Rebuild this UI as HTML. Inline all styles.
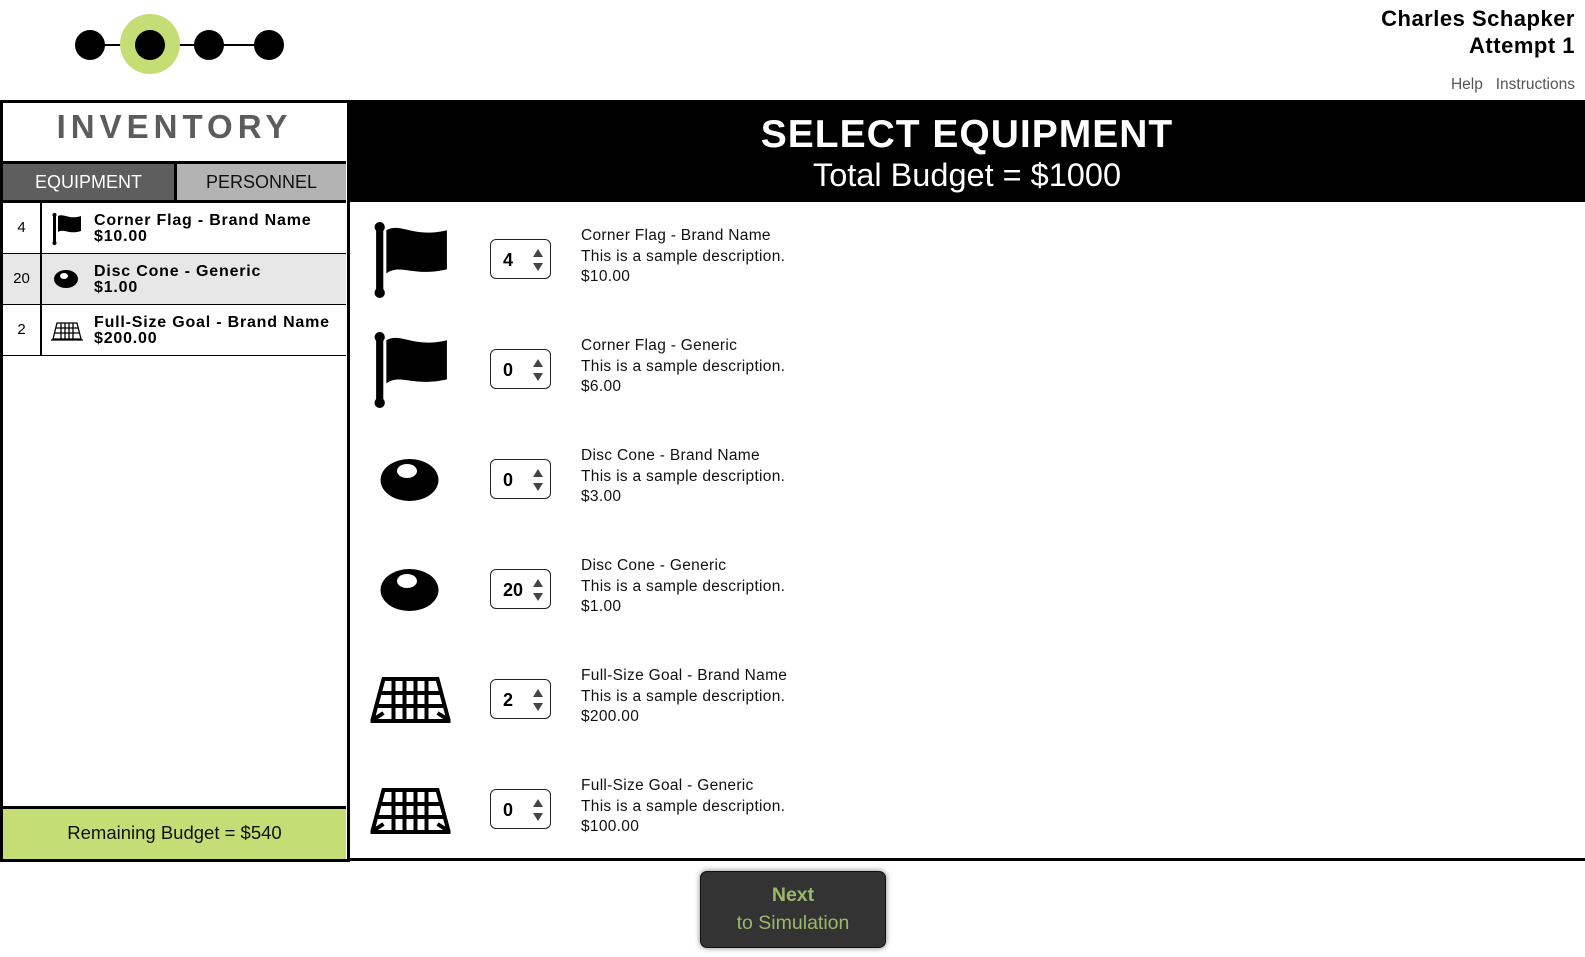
<!DOCTYPE html>
<html><head><style>
*{margin:0;padding:0;box-sizing:border-box}
body{width:1585px;height:957px;background:#fff;font-family:"Liberation Sans",sans-serif;position:relative;overflow:hidden}
.a{position:absolute}
.row{position:absolute;left:3px;width:343px;height:51px;border-bottom:1px solid #000}
.row .n{position:absolute;left:0;top:0;width:39px;height:50px;border-right:2px solid #000;text-align:center;line-height:50px;font-size:15px}
.row .t{position:absolute;left:91px;top:10px;font-weight:bold;font-size:16px;line-height:16px;letter-spacing:.8px}
.row svg{position:absolute;left:48px;top:10px}
.spin{position:absolute;left:490px;width:61px;height:40px;border:1.5px solid #222;border-radius:6px}
.spin b{position:absolute;left:12px;top:10px;font-size:18px}
.spin i{position:absolute;left:42px;width:0;height:0;border-left:5px solid transparent;border-right:5px solid transparent}
.up{top:9px;border-bottom:8px solid #444}
.dn{top:23px;border-top:8px solid #444}
.d{position:absolute;left:581px;font-size:15.5px;line-height:20.5px;color:#111;letter-spacing:.3px}
</style></head><body>
<svg class="a" style="left:72px;top:14px" width="225" height="62">
<line x1="18" y1="31" x2="197" y2="31" stroke="#000" stroke-width="2"/>
<circle cx="78" cy="30" r="30" fill="#c4dd74"/>
<circle cx="18" cy="31" r="15"/><circle cx="78" cy="31" r="15"/><circle cx="137" cy="31" r="15"/><circle cx="197" cy="31" r="15"/>
</svg>
<div class="a" style="right:10px;top:5px;text-align:right;font-weight:bold;font-size:22px;line-height:27px;letter-spacing:.5px">Charles Schapker<br>Attempt 1</div>
<div class="a" style="right:10px;top:76px;font-size:15.5px;color:#555">Help&nbsp;&nbsp;&nbsp;Instructions</div>

<div class="a" style="left:0;top:100px;width:1585px;height:102px;background:#000"></div>
<div class="a" style="left:349px;top:113px;width:1236px;text-align:center;color:#fff;font-weight:bold;font-size:39px;letter-spacing:1px;line-height:44px">SELECT EQUIPMENT</div>
<div class="a" style="left:349px;top:156px;width:1236px;text-align:center;color:#fff;font-size:32.5px;line-height:38px">Total Budget = $1000</div>

<div class="a" style="left:0;top:100px;width:350px;height:762px;border:3px solid #000;background:#fff"></div>
<div class="a" style="left:3px;top:108px;width:343px;text-align:center;font-size:33px;font-weight:bold;color:#5c5c5c;letter-spacing:5px">INVENTORY</div>
<div class="a" style="left:3px;top:161px;width:343px;height:3px;background:#000"></div>
<div class="a" style="left:3px;top:164px;width:171px;height:36px;background:#5e5e5e;color:#fff;font-size:18px;text-align:center;line-height:36px">EQUIPMENT</div>
<div class="a" style="left:174px;top:164px;width:3px;height:36px;background:#000"></div>
<div class="a" style="left:177px;top:164px;width:169px;height:36px;background:#b3b3b3;color:#111;font-size:18px;text-align:center;line-height:36px">PERSONNEL</div>
<div class="a" style="left:3px;top:200px;width:343px;height:3px;background:#000"></div>

<div class="row" style="top:203px"><div class="n">4</div>
<svg width="34" height="32" viewBox="0 0 34 32"><rect x="2" y="1" width="3" height="30"/><circle cx="3.5" cy="2" r="2"/><circle cx="3.5" cy="30" r="2"/><path d="M7 3 C13 0 18 7 30 3 L30 18 C18 22 13 15 7 19Z"/></svg>
<div class="t">Corner Flag - Brand Name<br>$10.00</div></div>
<div class="row" style="top:254px;background:#e6e7e6"><div class="n">20</div>
<svg width="34" height="32" viewBox="0 0 34 32"><ellipse cx="15" cy="15" rx="12" ry="9"/><ellipse cx="13" cy="12" rx="4" ry="3" fill="#fff"/></svg>
<div class="t">Disc Cone - Generic<br>$1.00</div></div>
<div class="row" style="top:305px"><div class="n">2</div>
<svg width="34" height="32" viewBox="0 0 34 32"><g fill="none" stroke="#000" stroke-width="1.3"><path d="M2 24 L6 8 L26 8 L30 24 Z"/><path d="M0 25 H32"/><path d="M10 8V24M14 8V24M18 8V24M22 8V24M5 13H27M4 18H28"/></g></svg>
<div class="t">Full-Size Goal - Brand Name<br>$200.00</div></div>

<div class="a" style="left:3px;top:806px;width:343px;height:3px;background:#000"></div>
<div class="a" style="left:3px;top:809px;width:343px;height:50px;background:#c4dd74;text-align:center;line-height:48px;font-size:18.5px;color:#111">Remaining Budget = $540</div>
<div class="a" style="left:349px;top:858px;width:1236px;height:3px;background:#000"></div>

<svg class="a" style="left:372px;top:222px" width="78" height="78" viewBox="0 0 76 76"><rect x="4" y="3" width="7" height="68"/><circle cx="7.5" cy="5" r="5"/><circle cx="7.5" cy="69" r="5"/><path d="M14 8 C28 0 40 16 73 8 L73 46 C40 54 28 40 14 50Z"/></svg>
<div class="spin" style="top:239px"><b>4</b><i class="up"></i><i class="dn"></i></div>
<div class="d" style="top:226px">Corner Flag - Brand Name<br>This is a sample description.<br>$10.00</div>

<svg class="a" style="left:372px;top:332px" width="78" height="78" viewBox="0 0 76 76"><rect x="4" y="3" width="7" height="68"/><circle cx="7.5" cy="5" r="5"/><circle cx="7.5" cy="69" r="5"/><path d="M14 8 C28 0 40 16 73 8 L73 46 C40 54 28 40 14 50Z"/></svg>
<div class="spin" style="top:349px"><b>0</b><i class="up"></i><i class="dn"></i></div>
<div class="d" style="top:336px">Corner Flag - Generic<br>This is a sample description.<br>$6.00</div>

<svg class="a" style="left:379px;top:457px" width="62" height="46"><ellipse cx="30.5" cy="23" rx="29" ry="21"/><ellipse cx="28" cy="14" rx="10" ry="7" fill="#fff"/></svg>
<div class="spin" style="top:459px"><b>0</b><i class="up"></i><i class="dn"></i></div>
<div class="d" style="top:446px">Disc Cone - Brand Name<br>This is a sample description.<br>$3.00</div>

<svg class="a" style="left:379px;top:567px" width="62" height="46"><ellipse cx="30.5" cy="23" rx="29" ry="21"/><ellipse cx="28" cy="14" rx="10" ry="7" fill="#fff"/></svg>
<div class="spin" style="top:569px"><b>20</b><i class="up"></i><i class="dn"></i></div>
<div class="d" style="top:556px">Disc Cone - Generic<br>This is a sample description.<br>$1.00</div>

<svg class="a" style="left:368px;top:675px" width="85" height="50" viewBox="0 0 84 50"><g fill="none" stroke="#000" stroke-width="4"><path d="M4 45 L15 4 L69 4 L80 45"/><path d="M2 46 H82"/><path d="M25 4V45M36 4V45M47 4V45M58 4V45M13 18H71M9 31H75M4 45 L15 38 M80 45 L69 38"/></g></svg>
<div class="spin" style="top:679px"><b>2</b><i class="up"></i><i class="dn"></i></div>
<div class="d" style="top:666px">Full-Size Goal - Brand Name<br>This is a sample description.<br>$200.00</div>

<svg class="a" style="left:368px;top:786px" width="85" height="50" viewBox="0 0 84 50"><g fill="none" stroke="#000" stroke-width="4"><path d="M4 45 L15 4 L69 4 L80 45"/><path d="M2 46 H82"/><path d="M25 4V45M36 4V45M47 4V45M58 4V45M13 18H71M9 31H75M4 45 L15 38 M80 45 L69 38"/></g></svg>
<div class="spin" style="top:789px"><b>0</b><i class="up"></i><i class="dn"></i></div>
<div class="d" style="top:776px">Full-Size Goal - Generic<br>This is a sample description.<br>$100.00</div>

<div class="a" style="left:700px;top:871px;width:186px;height:77px;background:#333;border:1.5px solid #111;border-radius:7px;box-shadow:0 0 6px rgba(0,0,0,.5);text-align:center;color:#9ab86a;font-size:19.5px;line-height:28px;padding-top:9px"><b>Next</b><br>to Simulation</div>
</body></html>
